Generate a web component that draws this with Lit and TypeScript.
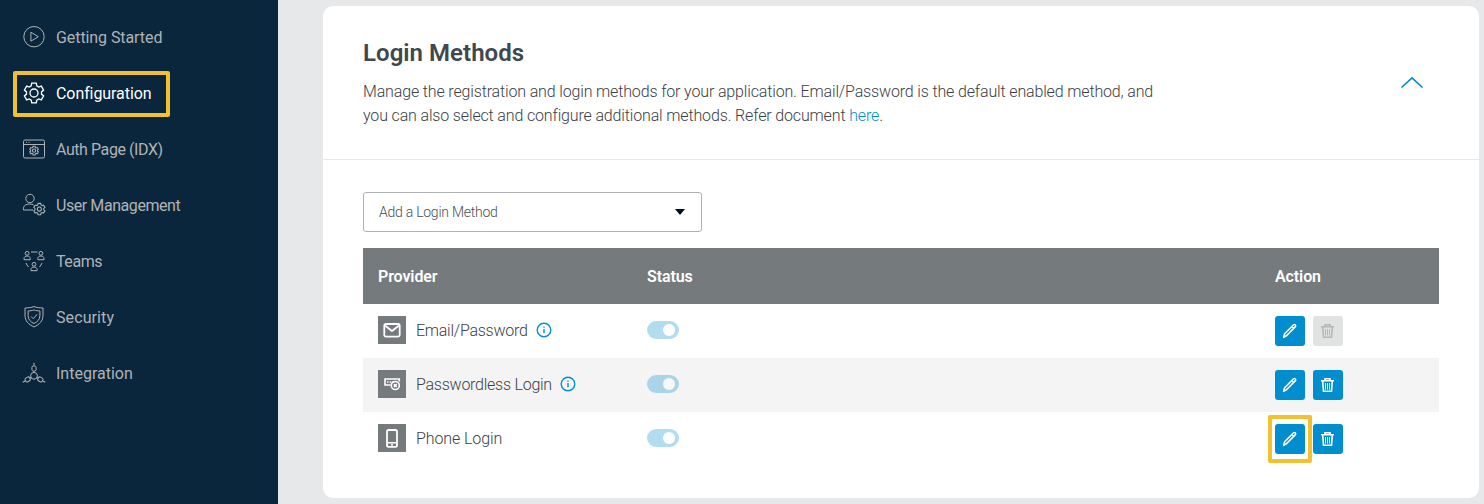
import { LitElement, html, css, svg, nothing } from "lit";
import { customElement } from "lit/decorators.js";

const gear = "M8.700 1.200h4.600l.5 2.700 1.900 1.100 2.600-.9 2.300 4-2.100 1.800v2.200l2.100 1.800-2.300 4-2.600-.9-1.900 1.100-.5 2.700H8.700l-.5-2.700L6.300 17l-2.600.9-2.300-4 2.100-1.800V9.900L1.400 8.100l2.300-4 2.600.9 1.900-1.100z";

const person = svg`<circle cx="3.500" cy="2.300" r="1.900"/><path d="M.4 8.700V7.600C.4 5.900 1.800 5 3.500 5s3.100.9 3.100 2.600v1.100z"/>`;
const plug = svg`<rect x="-2.100" y="-9.800" width="4.200" height="5" rx="1.500"/><path d="M0 -4.800v1.400M0 -9.800v-3.200"/>`;

const navIcons: Record<string, unknown> = {
  play: svg`<circle cx="11" cy="10.700" r="10.200"/><path d="M7.900 6.200v9l7.400-4.500z"/>`,
  gear: svg`<path d=${gear}/><circle cx="11" cy="11" r="4"/>`,
  page: svg`<rect x=".5" y="2" width="21" height="18" rx="1.500"/><path d="M.5 6.500h21"/><path d="M3 4.300h1M5.500 4.300h1"/><g transform="translate(6.100 7.700) scale(.45)" stroke-width="2.400"><path d=${gear}/><circle cx="11" cy="11" r="3.500"/></g>`,
  user: svg`<circle cx="7" cy="4.500" r="4.200"/><path d="M10 16H.5v-1.600C.5 11.700 3 10 6.500 10c1.600 0 3 .3 4 1"/><g transform="translate(10 8.700) scale(.58)" stroke-width="1.800"><path d=${gear}/><circle cx="11" cy="11" r="3.500"/></g>`,
  teams: svg`<g transform="translate(.6 1)">${person}</g><g transform="translate(14.400 1)">${person}</g><g transform="translate(7.500 12)">${person}</g><path d="M8 2h6.500M3 13l1 2 1.500 2M19 13l-1 2-1.500 2"/>`,
  shield: svg`<path d="M11 .5c2.800 1.400 5.600 1.200 9 1.500v7.200c0 5.800-3.700 9.500-9 11.700C5.700 18.700 2 15 2 9.200V2C5.400 1.700 8.200 1.900 11 .5z"/><path d="M11 3.900c2 .9 3.900.9 5.900 1v4.600c0 4-2.300 6.400-5.900 8-3.600-1.600-5.900-4-5.900-8V4.900c2-.1 3.900-.1 5.900-1z"/><path d="M8 10.500l2.200 2.200 4-4.500"/>`,
  hub: svg`<g transform="translate(11 13.800)"><circle r="3.400"/>${plug}<g transform="rotate(120)">${plug}</g><g transform="rotate(240)">${plug}</g></g>`,
};

const navItems = [
  { icon: "play", label: "Getting Started", cls: "snug" },
  { icon: "gear", label: "Configuration", cls: "snug", active: true },
  { icon: "page", label: "Auth Page (IDX)", cls: "tight" },
  { icon: "user", label: "User Management", cls: "tight" },
  { icon: "teams", label: "Teams", cls: "tight" },
  { icon: "shield", label: "Security", cls: "wide" },
  { icon: "hub", label: "Integration", cls: "even" },
];

const providerIcons: Record<string, unknown> = {
  mail: svg`<rect x="6.300" y="8" width="15.400" height="12.600" rx="1.500"/><path d="M7 9.500l7 5.500 7-5.500"/>`,
  key: svg`<path d="M12.500 15H7V9h14.300v2.500" stroke-width="1.600"/><path d="M9 12h1.500M11.700 12h1.500M14.400 12h1.500" stroke-width="1.700"/><circle cx="17.300" cy="15.500" r="4" stroke-width="1.600"/><path d="M15.900 14.100l2.800 2.800M18.700 14.100l-2.800 2.800" stroke-width="1.500"/>`,
  phone: svg`<rect x="9" y="6" width="10" height="16.800" rx="1.600"/><path d="M9 18.700h10M13 20.700h2" stroke-width="1.400"/>`,
};

const providers = [
  { icon: "mail", label: "Email/Password", cls: "even", info: true, locked: true },
  { icon: "key", label: "Passwordless Login", cls: "even", info: true },
  { icon: "phone", label: "Phone Login", cls: "wide", marked: true },
];

@customElement("side-nav")
class SideNav extends LitElement {
  static styles = css`
    :host { display: block; width: 278px; flex: none; background: #0a263c; padding-top: 9px; box-sizing: border-box; }
    .item { position: relative; display: flex; align-items: center; height: 56px; padding-left: 23px; gap: 11px; color: #b0b3b5; font-size: 16px; line-height: 24px; white-space: nowrap; }
    .item.active { color: #fff; }
    .item > span { padding-top: 2px; }
    .wide { letter-spacing: .1px; }
    .snug { letter-spacing: -.08px; }
    .tight { letter-spacing: -.43px; }
    .even { letter-spacing: 0; }
    svg { width: 22px; height: 22px; flex: none; fill: none; stroke: currentColor; stroke-width: 1; overflow: visible; margin-top: -1px; }
    .item.active svg { stroke-width: 1.300; }
    .mark { position: absolute; left: 13px; top: 6px; width: 157px; height: 46px; box-sizing: border-box; border: 4px solid #f3c030; border-radius: 2px; }
  `;
  render() {
    return navItems.map(
      (n) => html`<div class="item ${n.active ? "active" : ""}">
        <svg viewBox="0 0 22 22">${navIcons[n.icon]}</svg><span class=${n.cls}>${n.label}</span>
        ${n.active ? html`<div class="mark"></div>` : nothing}
      </div>`
    );
  }
}

@customElement("provider-table")
class ProviderTable extends LitElement {
  static styles = css`
    :host { display: block; }
    .row { display: grid; grid-template-columns: 269px 628px 1fr; height: 54px; padding-left: 15px; align-items: start; box-sizing: border-box; }
    .row > * { height: 52px; display: flex; align-items: center; }
    .row:nth-child(odd) { background: #f4f4f4; }
    .row.head { background: #757a7d; height: 56px; color: #fff; font-weight: 600; font-size: 16px; letter-spacing: -.1px; }
    .row.head > * { height: 56px; }
    .name { font-size: 16px; color: #3c4044; gap: 10px; white-space: nowrap; font-weight: 350; }
    .even { letter-spacing: -.25px; }
    .wide { letter-spacing: -.1px; }
    .tile { width: 28px; height: 28px; background: #757a7d; stroke: #fff; stroke-width: 1.800; fill: none; }
    .info { width: 16px; height: 16px; margin-left: -2px; fill: none; stroke: #008ecf; stroke-width: 1.400; }
    .switch { position: relative; display: block; width: 32px; height: 18px; }
    .track { width: 32px; height: 18px; border-radius: 9px; background: #008ecf; opacity: .3; display: block; }
    .knob { position: absolute; right: 4px; top: 3px; width: 12px; height: 12px; border-radius: 50%; background: #fff; }
    .row:nth-child(odd) .knob { background: #f7f7f8; }
    .row > .actions { gap: 8px; height: 54px; }
    .btn { position: relative; width: 30px; height: 30px; border-radius: 3px; background: #008ecf; color: #fff; }
    .btn.off { background: #e1e3e3; color: #b4b6b9; }
    .btn svg { display: block; width: 30px; height: 30px; fill: none; stroke: currentColor; stroke-width: 1.600; }
    .mark { position: absolute; left: -7px; top: -9px; width: 44px; height: 48px; box-sizing: border-box; border: 4px solid #f3c030; border-radius: 2px; }
  `;
  render() {
    return html`
      <div class="row head"><span>Provider</span><span>Status</span><span>Action</span></div>
      ${providers.map(
        (p) => html`<div class="row">
          <div class="name">
            <svg class="tile" viewBox="0 0 28 28">${providerIcons[p.icon]}</svg><span class=${p.cls}>${p.label}</span>
            ${p.info
              ? html`<svg class="info" viewBox="0 0 16 16"><circle cx="8" cy="8" r="6.800" /><path d="M8 7v4.200M8 4.500v1.300" /></svg>`
              : nothing}
          </div>
          <div><span class="switch"><span class="track"></span><span class="knob"></span></span></div>
          <div class="actions">
            <div class="btn">
              <svg viewBox="0 0 30 30"><path d="M8.600 21.400l1-3.700 8.700-8.700c.6-.6 1.400-.6 2-.1.500.6.500 1.400-.1 2l-8.500 8.600zM16.800 10.800l1.600 1.600" stroke-linejoin="round" /></svg>
              ${p.marked ? html`<div class="mark"></div>` : nothing}
            </div>
            <div class="btn ${p.locked ? "off" : ""}">
              <svg viewBox="0 0 30 30"><path d="M8 10.700h13M12 10.500V8.700h5v1.800M9.700 11l.8 10.300h8L19.300 11" /><path d="M12.500 13v6.500M14.500 13v6.500M16.500 13v6.500" stroke-width="1" /></svg>
            </div>
          </div>
        </div>`
      )}
    `;
  }
}

@customElement("app-root")
class AppRoot extends LitElement {
  static styles = css`
    :host { display: flex; height: 504px; background: #e7e8ea; font-family: Roboto, "Liberation Sans", sans-serif; overflow: hidden; }
    .card { margin: 6px 5px 6px 45px; flex: 1; background: #fff; border-radius: 10px; overflow: hidden; }
    .top { display: flex; justify-content: space-between; align-items: center; height: 154px; box-sizing: border-box; border-bottom: 1px solid #e7e8ea; padding: 0 55px 0 40px; }
    h1 { margin: 0 0 12px; font-size: 24px; line-height: 30px; font-weight: 600; letter-spacing: .04px; color: #40474e; white-space: nowrap; }
    p { margin: 0; font-size: 16px; line-height: 24px; letter-spacing: -.15px; font-weight: 350; color: #3c4044; white-space: nowrap; }
    a { color: #008ecf; }
    .chev { width: 24px; height: 14px; margin-bottom: 2px; fill: none; stroke: #008ecf; stroke-width: 1.700; }
    .body { padding: 32px 40px; }
    .select { width: 339px; height: 40px; box-sizing: border-box; border: 1px solid #aeb0b2; border-radius: 3px; display: flex; align-items: center; justify-content: space-between; padding: 0 16px 0 15px; font-size: 14px; letter-spacing: -.25px; font-weight: 350; color: #4a4f54; margin-bottom: 16px; }
    .caret { width: 10px; height: 6px; fill: #000c18; }
  `;
  render() {
    return html`
      <side-nav></side-nav>
      <main class="card">
        <div class="top">
          <div>
            <h1>Login Methods</h1>
            <p>Manage the registration and login methods for your application. Email/Password is the default enabled method, and<br />you can also select and configure additional methods. Refer document <a>here</a>.</p>
          </div>
          <svg class="chev" viewBox="0 0 24 14"><path d="M1.500 12.500L12 2.800l10.500 9.700" /></svg>
        </div>
        <div class="body">
          <div class="select"><span>Add a Login Method</span><svg class="caret" viewBox="0 0 10 6"><path d="M0 0h10L5 6z" /></svg></div>
          <provider-table></provider-table>
        </div>
      </main>
    `;
  }
}
